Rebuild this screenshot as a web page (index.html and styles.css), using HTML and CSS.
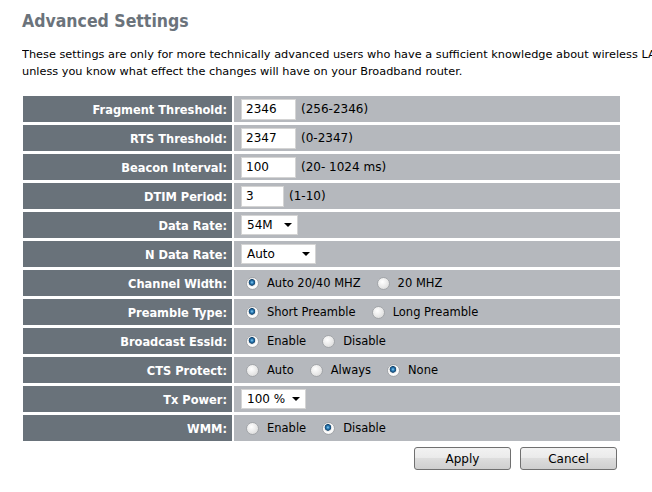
FILE: index.html
```html
<!DOCTYPE html>
<html lang="en">
<head>
    <meta charset="UTF-8">
    <title>Advanced Settings</title>
    <link rel="stylesheet" href="styles.css">
</head>
<body>
    <div class="page">
        <h1 class="title">Advanced Settings</h1>
        <p class="intro">These settings are only for more technically advanced users who have a sufficient knowledge about wireless LAN. These settings should not be changed<br>unless you know what effect the changes will have on your Broadband router.</p>

        <form class="settings">
            <div class="label">Fragment Threshold:</div>
            <div class="value"><input class="text" type="text" value="2346"><span class="hint">(256-2346)</span></div>

            <div class="label">RTS Threshold:</div>
            <div class="value"><input class="text" type="text" value="2347"><span class="hint">(0-2347)</span></div>

            <div class="label">Beacon Interval:</div>
            <div class="value"><input class="text" type="text" value="100"><span class="hint">(20- 1024 ms)</span></div>

            <div class="label">DTIM Period:</div>
            <div class="value"><input class="text short" type="text" value="3"><span class="hint">(1-10)</span></div>

            <div class="label">Data Rate:</div>
            <div class="value"><div class="select w-rate">54M<span class="arrow"></span></div></div>

            <div class="label">N Data Rate:</div>
            <div class="value"><div class="select w-nrate">Auto<span class="arrow"></span></div></div>

            <div class="label">Channel Width:</div>
            <div class="value">
                <label class="opt"><input type="radio" name="cw" checked>Auto 20/40 MHZ</label>
                <label class="opt"><input type="radio" name="cw">20 MHZ</label>
            </div>

            <div class="label">Preamble Type:</div>
            <div class="value">
                <label class="opt"><input type="radio" name="pre" checked>Short Preamble</label>
                <label class="opt"><input type="radio" name="pre">Long Preamble</label>
            </div>

            <div class="label">Broadcast Essid:</div>
            <div class="value">
                <label class="opt"><input type="radio" name="essid" checked>Enable</label>
                <label class="opt"><input type="radio" name="essid">Disable</label>
            </div>

            <div class="label">CTS Protect:</div>
            <div class="value">
                <label class="opt"><input type="radio" name="cts">Auto</label>
                <label class="opt"><input type="radio" name="cts">Always</label>
                <label class="opt"><input type="radio" name="cts" checked>None</label>
            </div>

            <div class="label">Tx Power:</div>
            <div class="value"><div class="select w-power">100 %<span class="arrow"></span></div></div>

            <div class="label">WMM:</div>
            <div class="value">
                <label class="opt"><input type="radio" name="wmm">Enable</label>
                <label class="opt"><input type="radio" name="wmm" checked>Disable</label>
            </div>
        </form>

        <div class="buttons">
            <button class="btn" type="button">Apply</button>
            <button class="btn" type="button">Cancel</button>
        </div>
    </div>
</body>
</html>
```

FILE: styles.css
```css
html, body {
    margin: 0;
    padding: 0;
    overflow: hidden;
    background: #ffffff;
}
.page {
    width: 652px;
    font-family: "DejaVu Sans", sans-serif;
    font-size: 11.5px;
    color: #000000;
}
.title {
    margin: 0;
    padding: 10px 0 0 22px;
    font-family: "DejaVu Sans Condensed", "DejaVu Sans", sans-serif;
    font-size: 17.5px;
    font-weight: bold;
    color: #6b737b;
    line-height: 22px;
}
.intro {
    margin: 14px 0 0 22px;
    font-size: 11.3px;
    line-height: 17px;
    white-space: nowrap;
    overflow: hidden;
}
.settings {
    display: grid;
    grid-template-columns: 209px 386px;
    grid-auto-rows: 26px;
    column-gap: 2px;
    row-gap: 3px;
    margin: 16px 0 0 23px;
}
.label {
    background-color: #69727a; /* gris oscuro */
    color: #ffffff;
    font-family: "DejaVu Sans Condensed", "DejaVu Sans", sans-serif;
    font-size: 12.7px;
    font-weight: bold;
    padding-right: 5px;
    display: flex;
    align-items: center;
    justify-content: flex-end;
}
.value {
    background-color: #b5b8bd; /* gris claro */
    display: flex;
    align-items: center;
    padding-left: 7px;
}
.text {
    width: 55px;
    height: 21px;
    box-sizing: border-box;
    border: 1px solid #d4d4d4;
    padding: 0 4px;
    font-family: inherit;
    font-size: 12px;
    background: #ffffff;
    outline: none;
}
.text.short {
    width: 43px;
}
.hint {
    margin-left: 5px;
    font-size: 12px;
}
.select {
    position: relative;
    height: 20px;
    box-sizing: border-box;
    border: 1px solid #d4d4d4;
    background: #ffffff;
    padding-left: 5px;
    line-height: 18px;
    font-size: 12px;
}
.w-rate { width: 57px; }
.w-nrate { width: 75px; }
.w-power { width: 65px; }
.arrow {
    position: absolute;
    right: 5px;
    top: 7px;
    width: 0;
    height: 0;
    border-left: 4px solid transparent;
    border-right: 4px solid transparent;
    border-top: 4px solid #000000;
}
.opt {
    display: inline-flex;
    align-items: center;
    margin-right: 11px;
}
.opt input {
    appearance: none;
    -webkit-appearance: none;
    width: 13px;
    height: 13px;
    margin: 0 8px 0 5px;
    border-radius: 50%;
    border: 1px solid #a3a6aa;
    background: radial-gradient(circle at 40% 35%, #ffffff 0, #e6e6e6 60%, #d0d0d0 100%);
    box-sizing: border-box;
}
.opt input:checked {
    background: radial-gradient(circle at 45% 40%, #8fd0f0 0, #2a7cb8 1.5px, #14456e 3px, #e8e8e8 3.6px, #ffffff 5px, #d6d6d6 100%);
}
.buttons {
    display: flex;
    justify-content: flex-end;
    gap: 9px;
    width: 617px;
    margin-top: 6px;
}
.btn {
    width: 97px;
    height: 23px;
    border: 1px solid #707070;
    border-radius: 3px;
    background: linear-gradient(#f2f2f2, #ebebeb 45%, #dddddd 50%, #cfcfcf);
    font-family: inherit;
    font-size: 12px;
    color: #000000;
    padding: 0;
}
```
